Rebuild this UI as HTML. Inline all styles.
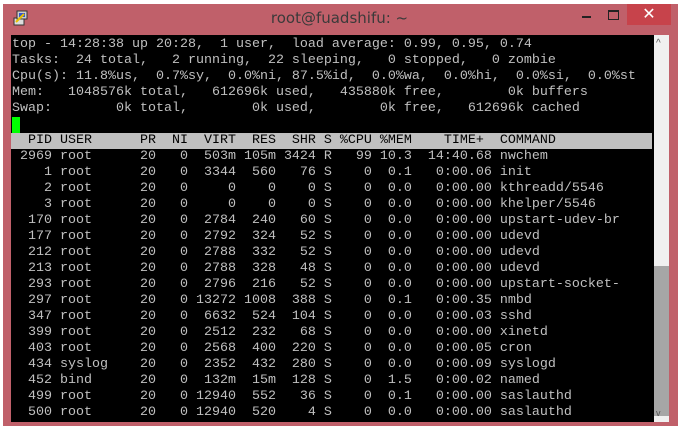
<!DOCTYPE html>
<html><head><style>
body{margin:0;width:679px;height:432px;background:#fff;position:relative;overflow:hidden;font-family:"Liberation Sans",sans-serif}
.frame{position:absolute;left:3px;top:4px;width:675px;height:422px;background:#c0606a}
.title{position:absolute;left:0;width:679px;top:9px;text-align:center;font-size:15px;color:#3a3a3a;font-family:"DejaVu Sans","Liberation Sans",sans-serif}
.term{position:absolute;left:11px;top:35px;width:643px;height:387px;background:#000}
pre{position:absolute;left:12px;top:37px;margin:0;font-family:"Liberation Mono",monospace;font-size:13.34px;line-height:16px;color:#c0c0c0;letter-spacing:0}
.hdr{background:#c0c0c0;color:#000;display:inline-block;width:640px;margin-left:-1px;padding-left:1px}
.cur{background:#00ff00;display:inline-block;width:8px;height:16px;vertical-align:top}
.sb{position:absolute;left:654px;top:35px;width:15px;height:387px;background:#f0f0f0}
.th{position:absolute;left:654px;top:266px;width:15px;height:150px;background:#a6a6a6}
.close{position:absolute;left:627px;top:4px;width:44px;height:21px;background:#c7434b;color:#fff;text-align:center;font-size:16px;line-height:21px}
</style></head><body>
<div class="frame"></div>
<div class="close">✕</div>
<div style="position:absolute;left:582px;top:16px;width:9px;height:2px;background:#222"></div>
<div style="position:absolute;left:608px;top:10px;width:9px;height:7px;border:1px solid #222;border-top-width:2px"></div>
<div class="title">root@fuadshifu: ~</div>
<svg style="position:absolute;left:13px;top:10px" width="16" height="16"><rect x="1" y="8" width="10" height="7" fill="#ddd" stroke="#333"/><rect x="4" y="1" width="10" height="8" fill="#ccc" stroke="#333"/><rect x="6" y="3" width="6" height="4" fill="#3355cc"/><path d="M3 12 L11 4" stroke="#e6c000" stroke-width="2"/></svg>
<div class="term"></div>
<div class="sb"></div><div class="th"></div>
<div style="position:absolute;left:656px;top:38px;font-size:10px;color:#555">^</div>
<div style="position:absolute;left:656px;top:408px;font-size:9px;color:#555">v</div>
<pre>top - 14:28:38 up 20:28,  1 user,  load average: 0.99, 0.95, 0.74
Tasks:  24 total,   2 running,  22 sleeping,   0 stopped,   0 zombie
Cpu(s): 11.8%us,  0.7%sy,  0.0%ni, 87.5%id,  0.0%wa,  0.0%hi,  0.0%si,  0.0%st
Mem:   1048576k total,   612696k used,   435880k free,        0k buffers
Swap:        0k total,        0k used,        0k free,   612696k cached
<span class="cur"></span>
<span class="hdr">  PID USER      PR  NI  VIRT  RES  SHR S %CPU %MEM    TIME+  COMMAND</span>
 2969 root      20   0  503m 105m 3424 R   99 10.3  14:40.68 nwchem
    1 root      20   0  3344  560   76 S    0  0.1   0:00.06 init
    2 root      20   0     0    0    0 S    0  0.0   0:00.00 kthreadd/5546
    3 root      20   0     0    0    0 S    0  0.0   0:00.00 khelper/5546
  170 root      20   0  2784  240   60 S    0  0.0   0:00.00 upstart-udev-br
  177 root      20   0  2792  324   52 S    0  0.0   0:00.00 udevd
  212 root      20   0  2788  332   52 S    0  0.0   0:00.00 udevd
  213 root      20   0  2788  328   48 S    0  0.0   0:00.00 udevd
  293 root      20   0  2796  216   52 S    0  0.0   0:00.00 upstart-socket-
  297 root      20   0 13272 1008  388 S    0  0.1   0:00.35 nmbd
  347 root      20   0  6632  524  104 S    0  0.0   0:00.03 sshd
  399 root      20   0  2512  232   68 S    0  0.0   0:00.00 xinetd
  403 root      20   0  2568  400  220 S    0  0.0   0:00.05 cron
  434 syslog    20   0  2352  432  280 S    0  0.0   0:00.09 syslogd
  452 bind      20   0  132m  15m  128 S    0  1.5   0:00.02 named
  499 root      20   0 12940  552   36 S    0  0.1   0:00.00 saslauthd
  500 root      20   0 12940  520    4 S    0  0.0   0:00.00 saslauthd</pre>
</body></html>
